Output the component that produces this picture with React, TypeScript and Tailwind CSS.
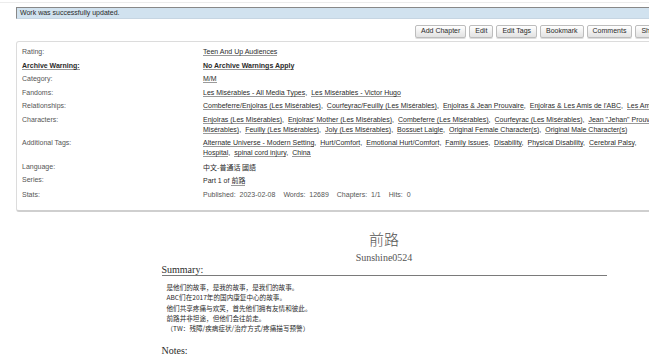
import React from "react";

const sans = { fontFamily: '"Liberation Sans", "Noto Sans CJK SC", sans-serif' };
const cjk = { fontFamily: '"Noto Sans CJK SC", "Liberation Sans", sans-serif' };
const serif = { fontFamily: '"Liberation Serif", "Noto Sans CJK SC", serif' };

function Tag({ children, last }: { children: React.ReactNode; last?: boolean }) {
  return (
    <span className="whitespace-nowrap">
      <span className="border-b border-[#9a9a9a]">{children}</span>
      {last ? null : <span className="mr-[4px]">,</span>}
    </span>
  );
}

function TagLine({ tags, lastComma }: { tags: string[]; lastComma?: boolean }) {
  return (
    <div className="whitespace-nowrap">
      {tags.map((t, i) => (
        <Tag key={i} last={i === tags.length - 1 && !lastComma}>
          {t}
        </Tag>
      ))}
    </div>
  );
}

function Btn({ children }: { children: React.ReactNode }) {
  return (
    <div className="h-[13px] px-[5px] flex items-center border border-[#bdbdbd] rounded-[2px] bg-gradient-to-b from-white to-[#e2e2e2] text-[7px] text-[#2a2a2a] whitespace-nowrap shadow-[0_1px_0_#ddd]">
      {children}
    </div>
  );
}

export default function App() {
  const label = "text-[#555] text-[7px]";
  return (
    <div className="w-[649px] h-[354px] overflow-hidden bg-white" style={sans}>
      <div className="w-[768px]">
        <div className="h-[3px] border-b border-[#ececec]" />
        {/* flash notice */}
        <div className="mx-4 mt-[4px] h-[12px] flex items-center pl-[3px] bg-[#d1e2ef] border-t border-l border-[#888] border-b border-b-[#c6d5e2] text-[7px] text-[#2a2a2a]">
          Work was successfully updated.
        </div>
        {/* buttons */}
        <div className="mt-[6px] ml-[415px] flex gap-[3px]">
          <Btn>Add Chapter</Btn>
          <Btn>Edit</Btn>
          <Btn>Edit Tags</Btn>
          <Btn>Bookmark</Btn>
          <Btn>Comments</Btn>
          <Btn>Share</Btn>
          <Btn>Download</Btn>
        </div>
        {/* meta box */}
        <div className="mx-4 mt-[3px] border border-[#dcdcdc] border-b-[2px] border-b-[#cfcfcf] rounded-[3px] pt-[5px] pb-[10px] pl-[5px]">
          <div className="grid grid-cols-[181px_1fr] gap-y-[3.5px] leading-[10px] text-[7px] text-[#2a2a2a]">
            <div className={label}>Rating:</div>
            <TagLine tags={["Teen And Up Audiences"]} />

            <div className="text-[#2a2a2a] font-bold">
              <span className="border-b border-[#9a9a9a]">Archive Warning:</span>
            </div>
            <div className="font-bold">
              <TagLine tags={["No Archive Warnings Apply"]} />
            </div>

            <div className={label}>Category:</div>
            <TagLine tags={["M/M"]} />

            <div className={label}>Fandoms:</div>
            <TagLine tags={["Les Misérables - All Media Types", "Les Misérables - Victor Hugo"]} />

            <div className={label}>Relationships:</div>
            <TagLine
              lastComma
              tags={[
                "Combeferre/Enjolras (Les Misérables)",
                "Courfeyrac/Feuilly (Les Misérables)",
                "Enjolras & Jean Prouvaire",
                "Enjolras & Les Amis de l'ABC",
                "Les Amis de l'ABC (Les Misérables)",
              ]}
            />

            <div className={label}>Characters:</div>
            <div>
              <div className="whitespace-nowrap">
                <Tag>Enjolras (Les Misérables)</Tag>
                <Tag>Enjolras' Mother (Les Misérables)</Tag>
                <Tag>Combeferre (Les Misérables)</Tag>
                <Tag>Courfeyrac (Les Misérables)</Tag>
                <span className="border-b border-[#9a9a9a]">Jean "Jehan" Prouvaire (Les</span>
              </div>
              <div className="whitespace-nowrap">
                <Tag>Misérables)</Tag>
                <Tag>Feuilly (Les Misérables)</Tag>
                <Tag>Joly (Les Misérables)</Tag>
                <Tag>Bossuet Laigle</Tag>
                <Tag>Original Female Character(s)</Tag>
                <Tag last>Original Male Character(s)</Tag>
              </div>
            </div>

            <div className={label}>Additional Tags:</div>
            <div>
              <TagLine
                lastComma
                tags={[
                  "Alternate Universe - Modern Setting",
                  "Hurt/Comfort",
                  "Emotional Hurt/Comfort",
                  "Family Issues",
                  "Disability",
                  "Physical Disability",
                  "Cerebral Palsy",
                ]}
              />
              <TagLine tags={["Hospital", "spinal cord injury", "China"]} />
            </div>

            <div className={label}>Language:</div>
            <div style={cjk} className="text-[7px]">中文-普通话 國語</div>

            <div className={label}>Series:</div>
            <div>
              Part 1 of{" "}
              <span className="border-b border-[#9a9a9a]" style={cjk}>
                前路
              </span>
            </div>

            <div className={label}>Stats:</div>
            <div className="text-[#555] whitespace-nowrap flex gap-[8px]">
              <span>Published:&nbsp; 2023-02-08</span>
              <span>Words:&nbsp; 12689</span>
              <span>Chapters:&nbsp; 1/1</span>
              <span>Hits:&nbsp; 0</span>
            </div>
          </div>
        </div>

        {/* work */}
        <div className="w-[445px] mx-auto">
          <div className="mt-[18px] text-center text-[15px] leading-[20px] font-light text-[#555]" style={serif}>
            前路
          </div>
          <div className="mt-[2px] text-center text-[10px] leading-[12px] text-[#555]" style={serif}>
            Sunshine0524
          </div>
          <div className="mt-[1px] text-[10px] leading-[10px] text-[#2a2a2a] border-b border-[#7a7a7a]" style={serif}>
            Summary:
          </div>
          <div className="mt-[6.5px] pl-[5px] text-[6.6px] leading-[10.3px] text-[#2a2a2a]" style={cjk}>
            <div>是他们的故事，是我的故事，是我们的故事。</div>
            <div>ABC们在2017年的国内康复中心的故事。</div>
            <div>他们共享疼痛与欢笑，首先他们拥有友情和彼此。</div>
            <div>前路并非坦途，但他们会往前走。</div>
            <div>（TW：残障/疾病症状/治疗方式/疼痛描写预警）</div>
          </div>
          <div className="mt-[12.5px] text-[10px] leading-[10px] text-[#2a2a2a] border-b border-[#7a7a7a]" style={serif}>
            Notes:
          </div>
        </div>
      </div>
    </div>
  );
}
